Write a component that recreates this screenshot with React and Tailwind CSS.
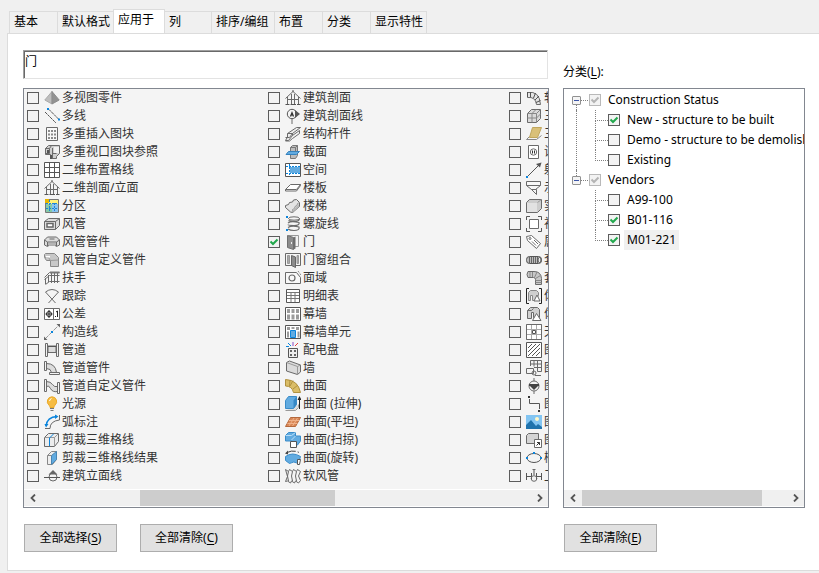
import { useState } from 'react'

const DARK = '#6a6a6a'
const LIGHT = '#dcdcdc'
const MID = '#b4b4b4'
const BLUE = '#0a84dc'
const SKY = '#62abe0'

// 16x16 drawings, one for each object type
const icons = {
  multiViewPart: (
    <>
      <path d="M8 1.500L.8 10 8 14z" fill="#bdbdbd" stroke="#aaa" />
      <path d="M8 1.500L15.200 10 8 14z" fill="#929292" stroke="#8c8c8c" />
    </>
  ),
  multiLine: (
    <>
      <path d="M1 4l11 11M5 1.500L15 11.500" stroke="#555" strokeDasharray="3 .6" />
      <path d="M3 0h2v2H3zM14 10.500h2v2h-2z" fill={BLUE} stroke="none" />
    </>
  ),
  multiInsert: (
    <>
      <path d="M2.500 1.500h11v13h-11z" fill="#f8f8f8" />
      <path d="M5 4v9M8 4v9M11 4v9" stroke="#8a8a8a" strokeWidth="2" strokeDasharray="2 1.500" />
    </>
  ),
  viewBlock: (
    <>
      <path d="M1.500 4.500l3-3h11v8l-3 3v2h-6v-4h-5z" fill="#cfcfcf" />
      <path d="M1.500 4.500h4v5h-4zM5.500 4.500l2-3M8.500 4v10M12.500 9.500h-4" />
      <path d="M3 6h2v3H3zM6 11h2v4H6z" fill="#555" stroke="none" />
      <path d="M10 3h5v6h-5z" fill="#f2f2f2" stroke="none" />
    </>
  ),
  grid2d: <path d="M.5.500h15v15H.5zM5.500.500v15M10.500.500v15M.5 5.500h15M.5 10.500h15" stroke="#555" fill="#fff" />,
  house: (
    <>
      <path d="M.5 8.500L8 1.500l7.500 7M2.500 7v7M13.500 7v7M6.500 14V4M9.500 14V4M2.500 9.500h11" />
      <path d="M.5 14.500h4M5.500 14.500h5.500M12 14.500h3.500M8 0v2" stroke="#555" />
    </>
  ),
  zone: (
    <>
      <path d="M1.500 1.500h13v13h-13z" fill="#fff27a" stroke="#777" />
      <path d="M2 6h6v8H2z" fill="#86c9a8" stroke="none" />
      <path d="M8 6h6v8H8z" fill="#8cc4ee" stroke="none" />
      <path d="M1 1h4v4H1z" fill="#e8b500" stroke="none" />
      <path d="M2 5.500h12M2 10.500h12M5.500 2v12M10.500 5v9" stroke="#1d86d6" strokeDasharray="2 1" />
    </>
  ),
  duct: (
    <>
      <path d="M.5 5.500l4-3h11v7l-4 4H.5z" fill={LIGHT} />
      <path d="M.5 5.500h11v8M11.500 5.500l4-3" />
      <path d="M3 7.500h6v3.500H3z" fill="#fff" stroke="#666" strokeWidth="1.500" />
    </>
  ),
  ductFitting: (
    <>
      <path d="M.5 6l3-3h9l3 3v5l-3 1.500-2-1.500h-5l-2 1.500-3-1.500z" fill={LIGHT} />
      <path d="M.5 6l3 2h9l3-2M3.500 8v4M12.500 8v4M5.500 5h5" />
      <path d="M4 9h8v2H4z" fill={MID} stroke="none" />
    </>
  ),
  ductCustom: (
    <>
      <path d="M.5 2.500l1-1h9l4 4v9h-8v-6h-4l-2-3z" fill="#c8c8c8" stroke="#888" />
      <path d="M6.500 8.500l8-.5M6.500 8.500l-2-3h-4" stroke="#999" />
      <path d="M2 4h4v1.500H2z" fill="#fff" stroke="none" />
    </>
  ),
  railing: (
    <>
      <path d="M.5 7.500l5-5h10M.5 9.500l5-4h10M1.500 8v6M4.500 5v7M7.500 3v10M10.500 3v10M13.500 3v10M1.500 14.500l4-3h10" />
      <path d="M6 2.500h9.500" strokeWidth="2" stroke="#777" />
    </>
  ),
  track: <path d="M1.500 4Q8-1 14.500 4L4.500 15M1.500 4l10 11" />,
  tolerance: (
    <>
      <path d="M.5 2.500h15v11H.5zM9.500 2.500v11" fill="#fff" />
      <circle cx="5" cy="8" r="2.500" stroke="#222" />
      <path d="M1.500 8h7M5 4v8M13.500 5v6M12 6l1.500-1M11 10.500h1" stroke="#222" />
    </>
  ),
  constructionLine: (
    <>
      <path d="M1 15L15 1" strokeDasharray="5 1" stroke="#999" />
      <path d="M0 16v-3.500L3.500 16zM16 0v3.500L12.500 0z" fill="#666" stroke="none" />
      <path d="M7 7h2v2H7z" fill={BLUE} stroke="none" />
    </>
  ),
  pipe: (
    <>
      <path d="M4 4h8v6.500H4z" fill={LIGHT} />
      <path d="M1.500 1.500h2v13h-2zM12.500 1.500h2v13h-2z" fill="#f2f2f2" />
      <path d="M4 4.500h8" stroke="#555" />
    </>
  ),
  pipeFitting: (
    <>
      <path d="M2.500 3.500q9 0 10 9h-5q-.5-4-5-4z" fill={LIGHT} />
      <path d="M.5 1.500h2v9h-2zM5.500 12.500h10v2h-10z" fill="#f4f4f4" />
    </>
  ),
  pipeCustom: (
    <>
      <path d="M2.500 3.500q4 0 6 3t5 2v5q-5 1-7-3t-4-2z" fill={LIGHT} />
      <path d="M.5 1.500h2v12h-2zM13.500 4.500h2v11h-2z" fill="#f4f4f4" />
    </>
  ),
  light: (
    <>
      <path d="M8 .8a4.700 4.700 0 0 0-3 8.300c.8.800.9 1.400 1 2.400h4c.1-1 .2-1.600 1-2.400A4.700 4.700 0 0 0 8 .8z" fill="#f6bc42" stroke="#eaa928" />
      <path d="M6 12.500h4M6.500 14.500h3" stroke="#777" />
      <path d="M5.500 5q.5-2 2-2.500" stroke="#fff" />
    </>
  ),
  arcDim: (
    <>
      <path d="M1 14.500h5M15.500 1v5M6 14.500Q6 7 15.500 6" />
      <path d="M2 12Q3 3 13 2.500" stroke={BLUE} strokeWidth="1.300" />
      <path d="M.5 10h4L2 13.500zM11 .5V5l3.500-2.500z" fill={BLUE} stroke="none" />
    </>
  ),
  trimGrid: (
    <>
      <path d="M.5 5.500l4-4h10v8l-4 5H.5z" fill="#ececec" />
      <path d="M.5 5.500h10v9M10.500 5.500l4-4" stroke="#999" />
      <path d="M5.500 14V6l4-4" stroke={BLUE} />
    </>
  ),
  trimGridResult: (
    <>
      <path d="M3.500 5.500l4-4h5v8l-4 5h-5z" fill="#eee" stroke="#888" />
      <path d="M7.500 5.500l5-4v8l-5 5z" fill={SKY} stroke="#4a86b3" />
      <path d="M3.500 5.500h4" stroke="#888" />
    </>
  ),
  elevationLine: (
    <>
      <circle cx="9" cy="9" r="4" />
      <path d="M0 9.500h16" stroke="#555" />
      <path d="M9 2l4.500 4.500h-9z" fill="#666" stroke="none" />
    </>
  ),
  sectionLine: (
    <>
      <circle cx="7" cy="6" r="4.700" stroke="#555" />
      <path d="M7 11v5" />
      <path d="M10 2l5 4-5 4z" fill="#555" stroke="none" />
      <path d="M7 3L4.800 8.500h1.500L7 7l.7 1.500h1.500z" fill="#333" stroke="none" />
    </>
  ),
  member: (
    <>
      <path d="M2.500 7.500l9-6h4l-8 6v2l-4 5h-3l2-3.500z" fill="#ececec" />
      <path d="M7.500 9.500l7-5v3l-7 5-3 2.500h-4M2.500 7.500h5l-3 4M.5 11.500h4" />
    </>
  ),
  sectionPlane: (
    <>
      <path d="M5.500 3.500l2-2h5v10l-2 3h-5z" fill="#bcbcbc" stroke="#777" />
      <path d="M3.500 7.500h11l-3 3H1z" fill={SKY} stroke="#3481bd" />
      <path d="M5.500 3.500h5v4M10.500 3.500l2-2" stroke="#777" />
    </>
  ),
  space: (
    <>
      <path d="M.5 1.500h15v13H.5z" fill="#fff" stroke="#555" />
      <path d="M5 5h10v6H5z" fill={SKY} stroke="none" />
      <path d="M4.500 2v12M1 4.500h14M1 11.500h14" stroke={BLUE} strokeDasharray="2 1" />
    </>
  ),
  slab: (
    <>
      <path d="M.5 9.500l5-5h10v1l-4 5.500H.5z" fill="#fff" />
      <path d="M.5 9.500h11l4-5" />
    </>
  ),
  stair: (
    <>
      <path d="M.5 7.500l3-1 1-2 3-.5 1-2 3-.5 3 3v4l-7 6-2-.5-5-4.500z" fill="#e4e4e4" />
      <path d="M8 14.500l-.5-3 2-1 .5-2 2-1 .5-2 2-1" stroke="#999" />
      <path d="M8 12l6-6v3l-6 5z" fill="#b8b8b8" stroke="none" />
    </>
  ),
  helix: (
    <>
      <ellipse cx="9" cy="2.500" rx="5.500" ry="1.700" />
      <path d="M14.500 2.500q0 3-5 3t-6-1M3 7q3-2.500 11-.5 1 3-5 3T3 8.500M3 11.500q4-2.500 11-.5 1 3.500-5 3.500-4 0-6-1.500" strokeWidth="1.200" />
      <path d="M1 0h2v2H1zM1 13h2v2H1z" fill={BLUE} stroke="none" />
    </>
  ),
  door: (
    <>
      <path d="M3.500 1.500h10v11h-10z" fill="#f2f2f2" stroke="#999" />
      <path d="M2.500 1.500l6 2v12l-6-2z" fill="#8c8c8c" stroke="#707070" />
      <path d="M8.500 3.500l2-1v12l-2 1z" fill="#6c6c6c" stroke="none" />
      <path d="M6.500 8v2" stroke="#eee" />
    </>
  ),
  doorWindow: (
    <>
      <path d="M.5 1.500h15v12H.5z" fill="#f5f5f5" />
      <path d="M2.500 3.500h2v8h-2zM12 3.500h1.500v8H12z" fill="#aaa" stroke="#999" />
      <path d="M6.500 3.500l4 1.500v10.500l-4-2z" fill="#8c8c8c" stroke="#666" />
    </>
  ),
  region: (
    <>
      <path d="M.5 2.500h11l4 5v6H.5z" fill="#f8f8f8" />
      <circle cx="7" cy="8" r="3" strokeWidth="1.200" />
      <path d="M13 1l3 4" strokeDasharray="1 1" />
    </>
  ),
  schedule: (
    <>
      <path d="M1.500 1.500h13v13h-13z" fill="#fff" stroke="#555" />
      <path d="M2 4.500h12M2 7.500h12M2 10.500h12M6 5v9M10 5v9" stroke="#777" />
    </>
  ),
  curtainWall: (
    <>
      <path d="M.5 1.500h15v13H.5z" fill="#fff" stroke="#555" />
      <path d="M2 3h3v4H2zM6.500 3h3v4h-3zM11 3h3v4h-3zM2 8.500h3v5H2zM6.500 8.500h3v5h-3zM11 8.500h3v5h-3z" fill="#9b9b9b" stroke="none" />
    </>
  ),
  curtainUnit: (
    <>
      <path d="M.5 1.500h15v13H.5z" fill="#fff" stroke="#555" />
      <path d="M2 3h3v3H2zM6.500 3h3v2h-3zM11 3h3v3h-3zM2 7.500h2v6H2zM12.500 7.500h2v6h-2z" fill="#9b9b9b" stroke="none" />
      <path d="M5.500 6.500h5v7h-5z" fill={SKY} stroke={BLUE} />
    </>
  ),
  panelBoard: (
    <>
      <path d="M3.500 6.500h9v9h-9z" fill="#eee" stroke="#555" />
      <path d="M5 8h2v2H5zM9 8h2v2H9zM5 12h2v2H5zM9 12h2v2H9z" fill="#666" stroke="none" />
      <path d="M8 0v4" stroke="#8b4bc8" />
      <path d="M3 1l3 3M1 4.500h3" stroke={BLUE} />
      <path d="M13 1l-3 3" stroke="#e23c3c" />
    </>
  ),
  wall: (
    <>
      <path d="M1.500 2.500l3-1.500 11 4v7l-3 2.500-11-3.500z" fill="#dadada" />
      <path d="M1.500 2.500l11 4v8M12.500 6.500l3-1.500" stroke="#999" />
    </>
  ),
  surface: (
    <>
      <path d="M.5 1.500Q13 2 15.500 14.500h-7Q7 8 .5 8z" fill="#dabd68" stroke="#b0913f" />
      <path d="M5 8L8 2.500M8 11l5-4M4.500 8.500L5 2" stroke="#b0913f" />
    </>
  ),
  surfaceExtrude: (
    <>
      <path d="M.5 14.500h10l3-3v-3" fill="#ddd" stroke="#999" />
      <path d="M.5 4.500l3-4h8v8l-3 4h-8z" fill={SKY} stroke="#3b8cc8" />
      <path d="M8.500 4.500l3-4v8l-3 4z" fill="#3688c6" stroke="none" />
      <path d="M14.500 13V3" stroke="#222" />
      <path d="M12.500 4h4l-2-4z" fill="#222" stroke="none" />
    </>
  ),
  surfacePlane: (
    <>
      <path d="M.5 12.500l5-9h10l-5 9z" fill="#d98756" stroke="#b4683c" />
      <path d="M4 12l5-8M7.500 12l5-8M2.500 9.500h10M4 6.500h10" stroke="#efb189" />
    </>
  ),
  surfaceSweep: (
    <>
      <path d="M.5 3.500l3-3h7v3.500h5v5l-3 4h-6v-4h-6z" fill={SKY} stroke="#3a8cca" />
      <path d="M.5 3.500h6l4-3M6.500 8l4-4" stroke="#b9def7" />
      <path d="M5.500 9.500h6v6h-6z" fill="#fff" stroke="#555" />
    </>
  ),
  surfaceRevolve: (
    <>
      <path d="M.5 6.500q7-5 15 0l-2 7q-5-3-9 0l-4-3z" fill={SKY} stroke="#3a8cca" />
      <path d="M2 2.500q6-3 12 0" stroke="#444" strokeDasharray="9 2" />
      <path d="M0 3.500L3 .500v4z" fill="#444" stroke="none" />
      <path d="M12.500 9.500h3l-1 5h-2z" fill="#fff" stroke="#555" />
    </>
  ),
  flexDuct: (
    <path
      d="M.5 1.500l3 2 1-2 3 2 1-2 3 2 1-2 3 2-2 4.500 2 4.500-2 2.500-3-2-1 2-3-2-1 2-3-2-2 .5 2-5z M3.500 3.500L2.500 8l1 5M7.500 3.500l-1 4.500 1 5M11.500 3.500l-1 4.500 1 5"
      fill="#f4f4f4"
    />
  ),
  flexPipe: (
    <>
      <path d="M1.500 2.500q12-2 13 12h-4q-1-8-9-7z" fill="#e4e4e4" />
      <path d="M4.500 7V2M7.500 8l2-5M9 10l4-4M10 12.500l4.500-2M1.500 2v5" stroke="#555" />
    </>
  ),
  grid3d: (
    <>
      <path d="M1.500 5.500l4-4h9v9l-4 4h-9z" fill="#dadada" />
      <path d="M1.500 5.500h9v9M10.500 5.500l4-4M6 5.500v9M1.500 10h9l4-4M6 5.500l4-4" stroke="#888" />
    </>
  ),
  face3d: (
    <>
      <path d="M.5 13.500l3-3M.5 13.500h10l5-4" stroke="#888" />
      <path d="M3.500 11.500l3-10h9l-4 10z" fill="#d9c078" stroke="#c0a65c" />
    </>
  ),
  device: (
    <>
      <path d="M2.500 1.500h10v13h-10z" fill="#fff" />
      <circle cx="7.500" cy="8" r="3.200" />
      <path d="M6.500 6.500v3M8.500 6.500v3" stroke="#333" />
    </>
  ),
  ray: (
    <>
      <path d="M2 14L13 3" stroke="#555" />
      <path d="M15.500.5l-1.500 5-4-3.500z" fill="#555" stroke="none" />
      <path d="M0 14h2v2H0z" fill={BLUE} stroke="none" />
    </>
  ),
  schematic: (
    <>
      <path d="M.5 1.500h14v4l-5 4h-4l-5-4z" fill="#f8f8f8" />
      <path d="M.5 5.500h14M5.500 9.500h5v5l-5-5" />
    </>
  ),
  solid: (
    <>
      <path d="M.5 4.500l3-3h12v9l-4 4H.5z" fill="#cdcdcd" />
      <path d="M1 5h10v9H1z" fill="#e2e2e2" stroke="none" />
      <path d="M11.500 4.500l4-3" stroke="#999" />
    </>
  ),
  viewport: (
    <>
      <path d="M3.500 3.500h9v9h-9z" fill="#fff" />
      <path d="M.5 4V.5H4M12 .5h3.500V4M15.500 12v3.500H12M4 15.500H.5V12" stroke="#555" />
    </>
  ),
  tag: (
    <>
      <path d="M.5 2.500l5-1 9 8-4 5-9-8z" fill="#fff" />
      <circle cx="4" cy="4.500" r="1" />
      <path d="M6 7.500l4 4M8 6l4 4" />
    </>
  ),
  conduit: (
    <>
      <rect x=".5" y="4.500" width="15" height="7" rx="3" fill="#bbb" stroke="#555" />
      <path d="M3.500 5v6M5.500 5v6M7.500 5v6M9.500 5v6M11.500 5v6" stroke="#666" />
      <ellipse cx="13.500" cy="8" rx="1.500" ry="2.500" fill="#eee" stroke="#555" />
    </>
  ),
  conduitFitting: (
    <>
      <path d="M2 1.500h6q7 0 7.500 7v6h-6v-5q0-2-2-2H2q-2-3 0-6z" fill="#c8c8c8" />
      <path d="M4 2v5M6.500 2v5M8.500 7.500L11 2M9.500 8.500l5-3M9.500 10.500h6M9.500 12.500h6" stroke="#888" />
    </>
  ),
  massGroup: (
    <>
      <path d="M3 .5H.5v15H3M13 .5h2.500v15H13" stroke="#222" />
      <path d="M2.500 12.500v-8l2-2h6l2 2v3l-3 5h-3v-5h-2v5z" fill="#cfcfcf" stroke="#888" />
      <path d="M8 13l3-6 3 6z" fill="#fff" />
    </>
  ),
  massElement: (
    <>
      <path d="M1.500 12.500v-8l3-3h7l2 2v8h-6v-5h-2v6z" fill="#d0d0d0" />
      <path d="M6.500 14.500l4-7 4.500 7z" fill="#fff" />
      <path d="M1.500 4.500h4l2-2" />
    </>
  ),
  ceilingGrid: (
    <>
      <path d="M.5.500h15v15H.5zM5.500 1v14M10.500 1v14M1 5.500h14M1 10.500h14" fill="#fff" stroke="#aaa" />
      <path d="M.5.500h15v15H.5z" />
      <path d="M6.500 6.500h3v3h-3z" stroke="#555" />
    </>
  ),
  hatch: (
    <>
      <path d="M.5.500h15v15H.5z" fill="#fff" stroke="#555" />
      <path d="M2 6l4-4M2 10l8-8M2 14L14 2M6 14l8-8M10 14l4-4" stroke="#555" />
    </>
  ),
  tableLayout: (
    <>
      <path d="M4.500.500h11v11h-4M4.500 6V.5M8 .500v6M11.500.500v11M4.500 4h11M8 7.500h7.500" />
      <path d="M.5 8.500h7v5h-7z" />
      <circle cx="8" cy="13" r="2" />
      <path d="M9 15.500h6" />
    </>
  ),
  marker: (
    <>
      <circle cx="8" cy="8" r="5" />
      <path d="M8 0v3M8 13v3" />
      <path d="M3 6h10v2h-1l-4 4-4-4H3z" fill="#444" stroke="none" />
    </>
  ),
  polyline: (
    <>
      <path d="M3.500 3v4.500h10V13" stroke="#555" />
      <path d="M2 0h2v2H2zM12 14h2v2h-2z" fill="#333" stroke="none" />
    </>
  ),
  image: (
    <>
      <path d="M0 1h16v14H0z" fill="#83c5f2" stroke="none" />
      <path d="M0 15v-4l5-5 5 6 2-2 4 3v2z" fill="#1f73ad" stroke="none" />
      <circle cx="11" cy="5" r="2" fill="#fff7c9" stroke="none" />
    </>
  ),
  solidRef: (
    <>
      <path d="M.5 3.500l2-2h10v8l-2 2H.5z" fill="#d4d4d4" />
      <path d="M8.500 7.500h7v8h-7z" fill="#fff" />
      <path d="M10.500 13.500l3-3M11 10.500h2.500V13" stroke="#333" />
    </>
  ),
  ellipse: (
    <>
      <ellipse cx="8" cy="8" rx="7" ry="4.500" stroke="#555" />
      <path d="M0 7h2v2H0zM14 7h2v2h-2zM7 2h2v2H7z" fill={BLUE} stroke="none" />
    </>
  ),
  valve: (
    <>
      <path d="M.5 5v7M15.500 5v7M.5 8.500h5M10.500 8.500h5M5.500 5v7M10.500 5v7M8 1v6" stroke="#555" />
      <circle cx="8" cy="10.500" r="2.800" />
      <path d="M6.500 1.500h3" />
    </>
  ),
}

const objectTypes = [
  ['多视图零件', 'multiViewPart'],
  ['多线', 'multiLine'],
  ['多重插入图块', 'multiInsert'],
  ['多重视口图块参照', 'viewBlock'],
  ['二维布置格线', 'grid2d'],
  ['二维剖面/立面', 'house'],
  ['分区', 'zone'],
  ['风管', 'duct'],
  ['风管管件', 'ductFitting'],
  ['风管自定义管件', 'ductCustom'],
  ['扶手', 'railing'],
  ['跟踪', 'track'],
  ['公差', 'tolerance'],
  ['构造线', 'constructionLine'],
  ['管道', 'pipe'],
  ['管道管件', 'pipeFitting'],
  ['管道自定义管件', 'pipeCustom'],
  ['光源', 'light'],
  ['弧标注', 'arcDim'],
  ['剪裁三维格线', 'trimGrid'],
  ['剪裁三维格线结果', 'trimGridResult'],
  ['建筑立面线', 'elevationLine'],
  ['建筑剖面', 'house'],
  ['建筑剖面线', 'sectionLine'],
  ['结构杆件', 'member'],
  ['截面', 'sectionPlane'],
  ['空间', 'space'],
  ['楼板', 'slab'],
  ['楼梯', 'stair'],
  ['螺旋线', 'helix'],
  ['门', 'door'],
  ['门窗组合', 'doorWindow'],
  ['面域', 'region'],
  ['明细表', 'schedule'],
  ['幕墙', 'curtainWall'],
  ['幕墙单元', 'curtainUnit'],
  ['配电盘', 'panelBoard'],
  ['墙', 'wall'],
  ['曲面', 'surface'],
  ['曲面 (拉伸)', 'surfaceExtrude'],
  ['曲面(平坦)', 'surfacePlane'],
  ['曲面(扫掠)', 'surfaceSweep'],
  ['曲面(旋转)', 'surfaceRevolve'],
  ['软风管', 'flexDuct'],
  ['软管', 'flexPipe'],
  ['三维格线', 'grid3d'],
  ['三维面', 'face3d'],
  ['设备', 'device'],
  ['射线', 'ray'],
  ['示意图', 'schematic'],
  ['实体', 'solid'],
  ['视口', 'viewport'],
  ['属性定义', 'tag'],
  ['套管', 'conduit'],
  ['套管管件', 'conduitFitting'],
  ['体量编组', 'massGroup'],
  ['体量元素', 'massElement'],
  ['天花板格线', 'ceilingGrid'],
  ['图案填充', 'hatch'],
  ['图纸布局', 'tableLayout'],
  ['图示符号', 'marker'],
  ['图示线', 'polyline'],
  ['图像', 'image'],
  ['图块参照', 'solidRef'],
  ['椭圆', 'ellipse'],
  ['卫浴管线', 'valve'],
]

const tabs = [
  { name: '基本', width: 'w-12' },
  { name: '默认格式', width: 'w-14' },
  { name: '应用于', width: 'w-13' },
  { name: '列', width: 'w-[46px]' },
  { name: '排序/编组', width: 'w-[63px]' },
  { name: '布置', width: 'w-12' },
  { name: '分类', width: 'w-12' },
  { name: '显示特性', width: 'w-[57px]' },
]

const categories = [
  {
    name: 'Construction Status',
    items: [
      { name: 'New - structure to be built', checked: true },
      { name: 'Demo - structure to be demolished', checked: false },
      { name: 'Existing', checked: false },
    ],
  },
  {
    name: 'Vendors',
    items: [
      { name: 'A99-100', checked: false },
      { name: 'B01-116', checked: true },
      { name: 'M01-221', checked: true, selected: true },
    ],
  },
]

function Checkbox({ id, muted, ...props }) {
  return (
    <span className="grid size-3 shrink-0">
      <input
        id={id}
        type="checkbox"
        className={`peer col-start-1 row-start-1 size-3 appearance-none border bg-[#f3f3f3] ${
          muted ? 'border-[#b9b9b9]' : 'border-[#5c5c5c]'
        }`}
        {...props}
      />
      <svg
        viewBox="0 0 12 12"
        className={`pointer-events-none col-start-1 row-start-1 hidden size-3 peer-checked:block ${
          muted ? 'text-[#b4b4b4]' : 'text-[#22a84d]'
        }`}
      >
        <path d="M2.500 5.500L5 8l4.500-4.500" fill="none" stroke="currentColor" strokeWidth="2" />
      </svg>
    </span>
  )
}

function Icon({ name }) {
  return (
    <svg viewBox="0 0 16 16" className="size-4 shrink-0" fill="none" stroke={DARK}>
      {icons[name]}
    </svg>
  )
}

function ScrollBar({ before, thumb, after }) {
  return (
    <div className="flex h-4 items-stretch bg-[#f0f0f0]">
      <button type="button" aria-label="向左滚动" className="flex w-[17px] shrink-0 items-center justify-center">
        <svg viewBox="0 0 6 8" className="h-2 w-1.5" fill="none" stroke="#555" strokeWidth="1.800">
          <path d="M5 .5L1.500 4 5 7.500" />
        </svg>
      </button>
      <div className="flex min-w-0 flex-1">
        <div style={{ flexGrow: before }} />
        <div className="bg-[#cdcdcd]" style={{ flexGrow: thumb }} />
        <div style={{ flexGrow: after }} />
      </div>
      <button type="button" aria-label="向右滚动" className="flex w-[17px] shrink-0 items-center justify-center">
        <svg viewBox="0 0 6 8" className="h-2 w-1.5" fill="none" stroke="#555" strokeWidth="1.800">
          <path d="M1 .5L4.500 4 1 7.500" />
        </svg>
      </button>
    </div>
  )
}

function PushButton({ label, hotkey, onClick }) {
  return (
    <button type="button" onClick={onClick} className="h-7 w-[93px] border border-[#adadad] bg-[#e1e1e1] pb-px text-center">
      {label}(<span className="underline underline-offset-2">{hotkey}</span>)
    </button>
  )
}

function TreeGroup({ group, last, checked, onToggle }) {
  return (
    <li>
      <div className="flex h-5 items-center">
        <div className="flex h-full w-[9px] shrink-0 flex-col items-center">
          <span className={`w-px flex-1 border-l border-dotted ${last ? 'border-[#808080]' : 'border-transparent'}`} />
          <button
            type="button"
            aria-label={`折叠 ${group.name}`}
            className="flex size-[9px] shrink-0 items-center justify-center rounded-[1px] border border-[#919191] bg-[#f4f4f4]"
          >
            <span className="h-px w-[5px] bg-[#3b54a8]" />
          </button>
          <span className={`w-px flex-1 border-l border-dotted ${last ? 'border-transparent' : 'border-[#808080]'}`} />
        </div>
        <span className="mr-px w-[7px] shrink-0 border-t border-dotted border-[#808080]" />
        <Checkbox id={`group-${group.name}`} muted checked readOnly />
        <label htmlFor={`group-${group.name}`} className="ml-1 px-[3px] whitespace-nowrap">
          {group.name}
        </label>
      </div>
      <ul className={`ml-1 border-l border-dotted ${last ? 'border-transparent' : 'border-[#808080]'}`}>
        {group.items.map((item, index) => (
          <li key={item.name} className="ml-[18px] flex h-5 items-center">
            <span className="flex h-full w-[13px] shrink-0 flex-col">
              <span className="h-[11px] border-b border-l border-dotted border-[#808080]" />
              {index < group.items.length - 1 && <span className="flex-1 border-l border-dotted border-[#808080]" />}
            </span>
            <Checkbox id={item.name} checked={checked.includes(item.name)} onChange={() => onToggle(item.name)} />
            <label
              htmlFor={item.name}
              className={`ml-1 px-[3px] leading-5 whitespace-nowrap ${item.selected ? 'bg-[#f0f0f0]' : ''}`}
            >
              {item.name}
            </label>
          </li>
        ))}
      </ul>
    </li>
  )
}

export default function App() {
  const [activeTab, setActiveTab] = useState('应用于')
  const [types, setTypes] = useState(['门'])
  const [checkedItems, setCheckedItems] = useState(
    categories.flatMap((group) => group.items.filter((item) => item.checked).map((item) => item.name))
  )

  const toggle = (list, name) => (list.includes(name) ? list.filter((n) => n !== name) : [...list, name])

  return (
    <div className="flex min-h-screen flex-col bg-[#f0f0f0] pt-[9px] pb-0.5 pl-[7px] font-['Noto_Sans','Noto_Sans_CJK_SC',sans-serif] text-xs text-black">
      <div role="tablist" className="flex items-end pl-0.5">
        {tabs.map((tab, index) => {
          const active = tab.name === activeTab
          return (
            <button
              key={tab.name}
              type="button"
              role="tab"
              aria-selected={active}
              onClick={() => setActiveTab(tab.name)}
              className={`shrink-0 border-t border-[#dcdcdc] pl-1 text-left whitespace-nowrap ${tab.width} ${
                active ? '-mb-px h-[25px] border-x bg-white pb-1' : 'h-[22px] pb-0.5'
              } ${!active && tabs[index - 1]?.name !== activeTab ? 'border-l' : ''} ${
                index === tabs.length - 1 ? 'border-r' : ''
              }`}
            >
              {tab.name}
            </button>
          )
        })}
      </div>

      <main className="flex-1 border-y border-l border-[#dcdcdc] bg-white pt-4 pr-3.5 pb-4 pl-[15px]">
        <div className="grid grid-cols-[minmax(0,1fr)_242px] gap-x-3.5">
          <section>
            <div className="pr-px">
              <input
                aria-label="应用于"
                readOnly
                value={types.join('; ')}
                className="block h-[29px] w-full border border-t-[#a0a0a0] border-r-[#e3e3e3] border-b-[#e3e3e3] border-l-[#a0a0a0] bg-white pb-2 pl-px shadow-[inset_1px_1px_0_#696969] outline-none"
              />
            </div>
            <div className="mt-[9px] border border-[#828790] bg-white pb-px">
              <ul className="mb-px grid h-[400px] auto-cols-[241px] grid-flow-col grid-rows-[repeat(22,18px)] overflow-hidden bg-[#f4f4f4] pl-[3px] text-[#333]">
                {objectTypes.map(([name, icon]) => (
                  <li key={name} className="flex items-center">
                    <Checkbox id={`type-${name}`} checked={types.includes(name)} onChange={() => setTypes(toggle(types, name))} />
                    <label htmlFor={`type-${name}`} className="ml-[5px] flex items-center gap-0.5 leading-[18px] whitespace-nowrap">
                      <Icon name={icon} />
                      {name}
                    </label>
                  </li>
                ))}
              </ul>
              <ScrollBar before={99} thumb={195} after={196} />
            </div>
            <div className="mt-4 flex gap-[23px] pl-px">
              <PushButton label="全部选择" hotkey="S" onClick={() => setTypes(objectTypes.map(([name]) => name))} />
              <PushButton label="全部清除" hotkey="C" onClick={() => setTypes([])} />
            </div>
          </section>

          <section className="pt-3.5">
            <h2 className="mb-2 leading-4">
              分类(<span className="underline underline-offset-2">L</span>):
            </h2>
            <div className="border border-[#828790] bg-white pb-px">
              <ul className="mb-px h-[400px] overflow-hidden pt-px pl-2">
                {categories.map((group, index) => (
                  <TreeGroup
                    key={group.name}
                    group={group}
                    last={index === categories.length - 1}
                    checked={checkedItems}
                    onToggle={(name) => setCheckedItems(toggle(checkedItems, name))}
                  />
                ))}
              </ul>
              <ScrollBar before={1} thumb={180} after={25} />
            </div>
            <div className="mt-4 pl-px">
              <PushButton label="全部清除" hotkey="E" onClick={() => setCheckedItems([])} />
            </div>
          </section>
        </div>
      </main>
    </div>
  )
}
